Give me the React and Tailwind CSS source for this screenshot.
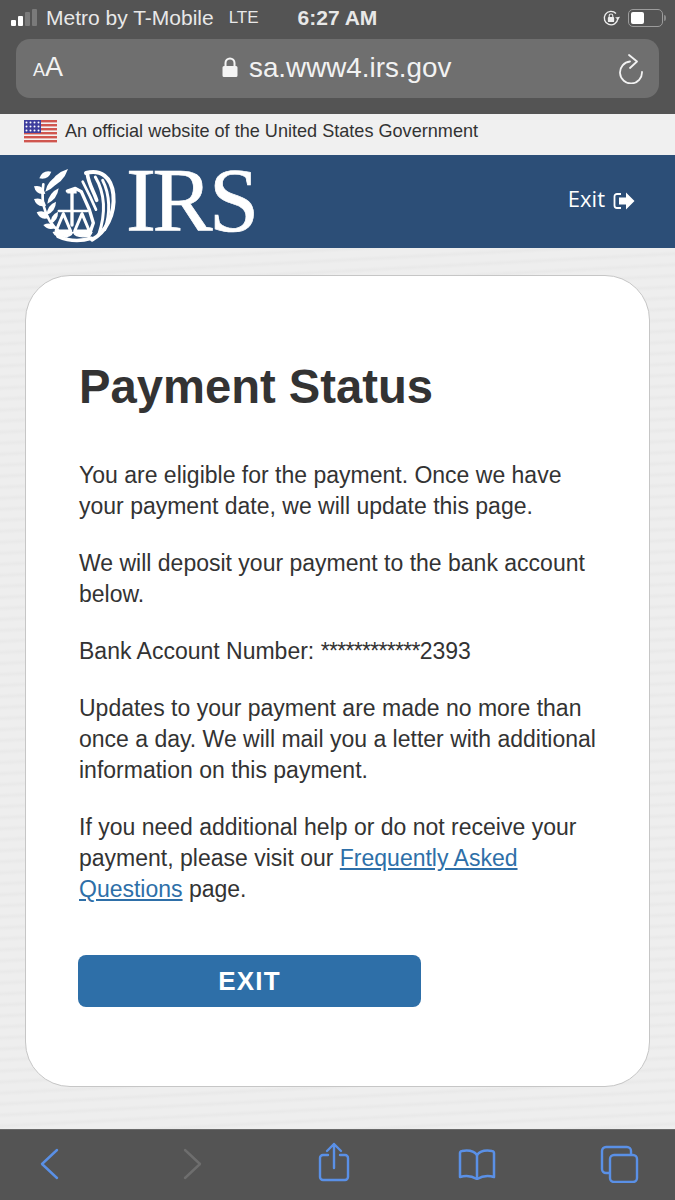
import React from "react";

const sans = "font-['Liberation_Sans',Arial,sans-serif]";

const UsFlag = () => (
  <svg width="33" height="24" viewBox="0 0 33 24">
    <rect width="33" height="24" fill="#f3f3f3" />
    {[0, 4, 8, 12, 16, 20].map((y) => (
      <rect key={y} y={y} width="33" height="2.4" fill="#d0564f" />
    ))}
    <rect width="17" height="13" fill="#3f3f9e" />
    {[2.5, 6.5, 10.5].map((y) =>
      [2.5, 6.5, 10.5, 14.5].map((x) => <circle key={`${x}-${y}`} cx={x} cy={y} r="1" fill="#fff" />)
    )}
  </svg>
);

// wreath leaves as [x1, y1, x2, y2, width]
const leaves = [
  [28, 52, 64, 32, 18],
  [12, 76, 46, 98, 20],
  [12, 114, 48, 134, 20],
  [20, 154, 58, 170, 20],
  [40, 192, 78, 200, 16],
  [54, 82, 114, 24, 22],
  [46, 92, 86, 46, 18],
  [52, 128, 86, 82, 16],
  [50, 162, 78, 122, 16],
  [62, 188, 84, 152, 14],
];

const leafPath = ([x1, y1, x2, y2, w]) => {
  const mx = (x1 + x2) / 2;
  const my = (y1 + y2) / 2;
  const len = Math.hypot(x2 - x1, y2 - y1);
  const nx = (-(y2 - y1) / len) * w;
  const ny = ((x2 - x1) / len) * w;
  return `M${x1} ${y1}Q${mx + nx} ${my + ny} ${x2} ${y2}Q${mx - nx} ${my - ny} ${x1} ${y1}z`;
};

const IrsSeal = () => (
  <svg width="90" height="82" viewBox="0 0 270 246" fill="none" stroke="#fff" strokeLinecap="round" strokeLinejoin="round">
    {leaves.map((l, i) => (
      <path key={i} d={leafPath(l)} fill="#fff" stroke="none" />
    ))}
    <path d="M40 70C30 130 50 195 110 226" strokeWidth="8" />
    <path d="M84 226C115 240 150 242 184 232" strokeWidth="11" />
    {/* wing */}
    <path d="M168 36C212 24 244 48 250 100C256 160 228 214 186 236" strokeWidth="12" />
    <path d="M172 38C176 70 192 92 200 118" strokeWidth="11" />
    <path d="M196 48C222 92 230 150 206 222" strokeWidth="9" />
    <path d="M218 58C240 100 242 160 224 206" strokeWidth="9" />
    {/* head and body */}
    <path d="M112 90L136 82L154 92L178 146L190 186L176 226" strokeWidth="10" />
    <path d="M158 62L180 106L198 146" strokeWidth="8" />
    {/* balance */}
    <path d="M112 92H140" strokeWidth="11" strokeLinecap="butt" />
    <path d="M126 96V192" strokeWidth="10" />
    <path d="M86 150H172" strokeWidth="7" />
    <path d="M100 158L78 210H122z" strokeWidth="9" />
    <path d="M156 158L134 210H178z" strokeWidth="9" />
    <path d="M70 214H128C122 232 78 232 70 214z" fill="#fff" strokeWidth="4" />
    <path d="M130 214H186C180 232 138 232 130 214z" fill="#fff" strokeWidth="4" />
  </svg>
);

const TopBar = () => (
  <div className={`h-[114px] bg-[#545454] text-white px-4 ${sans}`}>
    <div className="h-[39px] flex items-center -mx-4 pl-[11px] pr-[9px] pb-[4px]">
      <div className="flex items-end gap-[2px] h-[17px]">
        <span className="w-[5px] h-[6px] bg-white rounded-[1px]" />
        <span className="w-[5px] h-[10px] bg-white rounded-[1px]" />
        <span className="w-[5px] h-[14px] bg-[#7a7a7a] rounded-[1px]" />
        <span className="w-[5px] h-[17px] bg-[#7a7a7a] rounded-[1px]" />
      </div>
      <span className="ml-[9px] text-[21px] text-[#e8e8e8]">Metro by T-Mobile</span>
      <span className="ml-[15px] text-[17px] text-[#e8e8e8]">LTE</span>
      <span className="ml-[39px] text-[21px] font-semibold text-[#e8e8e8]">6:27 AM</span>
      <div className="ml-auto flex items-center gap-[8px]">
        <svg width="18" height="18" viewBox="0 0 20 20" fill="none">
          <path d="M15.500 5A7.500 7.500 0 1 0 17.500 11" stroke="#ededed" strokeWidth="1.500" />
          <path d="M14.500 9.500l3.500 2.500 2-3.500z" fill="#ededed" />
          <rect x="6.500" y="9" width="7" height="5.500" rx="1" fill="#ededed" />
          <path d="M8 9V7.500a2 2 0 0 1 4 0V9" stroke="#ededed" strokeWidth="1.200" />
        </svg>
        <div className="flex items-center gap-[1px]">
          <div className="w-[35px] h-[18px] rounded-[5px] border border-[#9c9c9c] p-[2px]">
            <div className="w-[13px] h-full bg-white rounded-[2px]" />
          </div>
          <span className="w-[2px] h-[6px] bg-[#8a8a8a] rounded-r-sm" />
        </div>
      </div>
    </div>
    <div className="h-[59px] rounded-[14px] bg-[#6f6f6f] flex items-center pl-[17px] pr-[15px]">
      <span className="flex items-baseline w-[189px] text-[#f2f2f2] mb-[2px]">
        <span className="text-[18px]">A</span>
        <span className="text-[27px]">A</span>
      </span>
      <svg width="16" height="21" viewBox="0 0 16 21" fill="#f4f4f4" className="mr-[11px] mb-[2px]">
        <path d="M2 9h12a1.500 1.500 0 0 1 1.500 1.500v8A1.500 1.500 0 0 1 14 20H2a1.500 1.500 0 0 1-1.500-1.500v-8A1.500 1.500 0 0 1 2 9z" />
        <path d="M3.500 10V6a4.500 4.500 0 0 1 9 0v4" fill="none" stroke="#f4f4f4" strokeWidth="2" />
      </svg>
      <span className="text-[27.800px] text-[#f2f2f2] leading-none mb-[2px]">sa.www4.irs.gov</span>
      <svg width="26" height="30" viewBox="0 0 26 30" fill="none" stroke="#f2f2f2" strokeWidth="1.800" strokeLinecap="round" strokeLinejoin="round" className="ml-auto">
        <path d="M12 7.500A11 11 0 1 0 24 18" />
        <path d="M11 1l8 6.500-7 6.500" />
      </svg>
    </div>
  </div>
);

const GovBanner = () => (
  <div className={`h-[41px] bg-[#f0f0f0] flex items-center pl-[24px] pb-[6px] gap-[8px] text-[#333] text-[18.100px] ${sans}`}>
    <UsFlag />
    <span>An official website of the United States Government</span>
  </div>
);

const SiteHeader = () => (
  <div className="h-[93px] bg-[#2c4e77] flex items-center pl-[30px] pr-[40px]">
    <IrsSeal />
    <span className="ml-[6px] font-['Liberation_Serif',serif] text-[90px] leading-none text-white tracking-[-3.500px] scale-y-[1.020] mt-[-4px] [-webkit-text-stroke:0.7px_#fff]">IRS</span>
    <span className="ml-auto flex items-center gap-[8px] text-white text-[22px] font-['Open_Sans',sans-serif] mt-[-6px]">
      Exit
      <svg width="22" height="20" viewBox="0 0 22 20" fill="#fff" className="mt-[5px]">
        <path d="M8 3H4a2.500 2.500 0 0 0-2.500 2.500v9A2.500 2.500 0 0 0 4 17h4" fill="none" stroke="#fff" strokeWidth="1.800" />
        <path d="M6 6.500h7V1.500l8.500 8.500-8.500 8.500v-5H6z" />
      </svg>
    </span>
  </div>
);

const Card = () => (
  <div className={`h-[812px] rounded-[45px] border border-[#c6c6c6] bg-white pl-[53px] pr-[50px] pt-[81px] text-[#333] ${sans}`}>
    <h1 className="text-[47.200px] leading-[60px] font-bold">Payment Status</h1>
    <div className="mt-[43px] space-y-[26px] text-[23px] leading-[31px]">
      <p>You are eligible for the payment. Once we have your payment date, we will update this page.</p>
      <p>We will deposit your payment to the bank account below.</p>
      <p>
        Bank Account Number: <span className="tracking-[-0.700px]">************</span>2393
      </p>
      <p>Updates to your payment are made no more than once a day. We will mail you a letter with additional information on this payment.</p>
      <p>
        If you need additional help or do not receive your payment, please visit our{" "}
        <a className="text-[#2e6fa8] underline">Frequently Asked</a>{" "}
        <a className="text-[#2e6fa8] underline">Questions</a> page.
      </p>
    </div>
    <button className="mt-[50px] ml-[-1px] w-[343px] h-[52px] rounded-[8px] bg-[#2e6fa8] text-white text-[26px] font-bold tracking-[1.200px]">EXIT</button>
  </div>
);

const BottomBar = () => (
  <div className="h-[71px] bg-[#545454] border-t border-[#6a6a6a] flex items-center pl-[40px] pb-[2px]">
    <svg width="20" height="32" viewBox="0 0 20 32" fill="none" stroke="#5a90e6" strokeWidth="2.400" strokeLinecap="round" strokeLinejoin="round">
      <path d="M17 2L2 16l15 14" />
    </svg>
    <svg width="20" height="32" viewBox="0 0 20 32" fill="none" stroke="#6e6e6e" strokeWidth="2.400" strokeLinecap="round" strokeLinejoin="round" className="ml-[122px]">
      <path d="M3 2l15 14L3 30" />
    </svg>
    <svg width="32" height="40" viewBox="0 0 32 40" fill="none" stroke="#5a90e6" strokeWidth="2.400" strokeLinecap="round" strokeLinejoin="round" className="ml-[116px] mb-[4px]">
      <path d="M10 13H5a3 3 0 0 0-3 3v19a3 3 0 0 0 3 3h22a3 3 0 0 0 3-3V16a3 3 0 0 0-3-3h-5" />
      <path d="M16 26V2M9 9l7-7 7 7" />
    </svg>
    <svg width="38" height="32" viewBox="0 0 38 32" fill="none" stroke="#5a90e6" strokeWidth="2.500" strokeLinecap="round" strokeLinejoin="round" className="ml-[108px]">
      <path d="M19 7c-3-4-9-5-15-4-1 0-2 1-2 2v24c6-2 12-1 17 2 5-3 11-4 17-2V5c0-1-1-2-2-2-6-1-12 0-15 4z" />
      <path d="M19 7v24" />
    </svg>
    <svg width="39" height="38" viewBox="0 0 39 38" fill="none" stroke="#5a90e6" strokeWidth="2.400" strokeLinecap="round" strokeLinejoin="round" className="ml-[104px]">
      <path d="M9 28H6a4 4 0 0 1-4-4V6a4 4 0 0 1 4-4h21a4 4 0 0 1 4 4v3" />
      <rect x="10" y="10" width="27" height="27" rx="4" />
    </svg>
  </div>
);

export default function App() {
  return (
    <div className="w-[675px] h-[1200px] overflow-hidden flex flex-col">
      <TopBar />
      <GovBanner />
      <SiteHeader />
      <main className="flex-1 bg-[#ececec] bg-[repeating-linear-gradient(177deg,#eeeeee_0px,#eeeeee_5px,#e9e9e9_8px,#eeeeee_11px)] pl-[25px] pr-[25px] pt-[27px]">
        <Card />
      </main>
      <BottomBar />
    </div>
  );
}
